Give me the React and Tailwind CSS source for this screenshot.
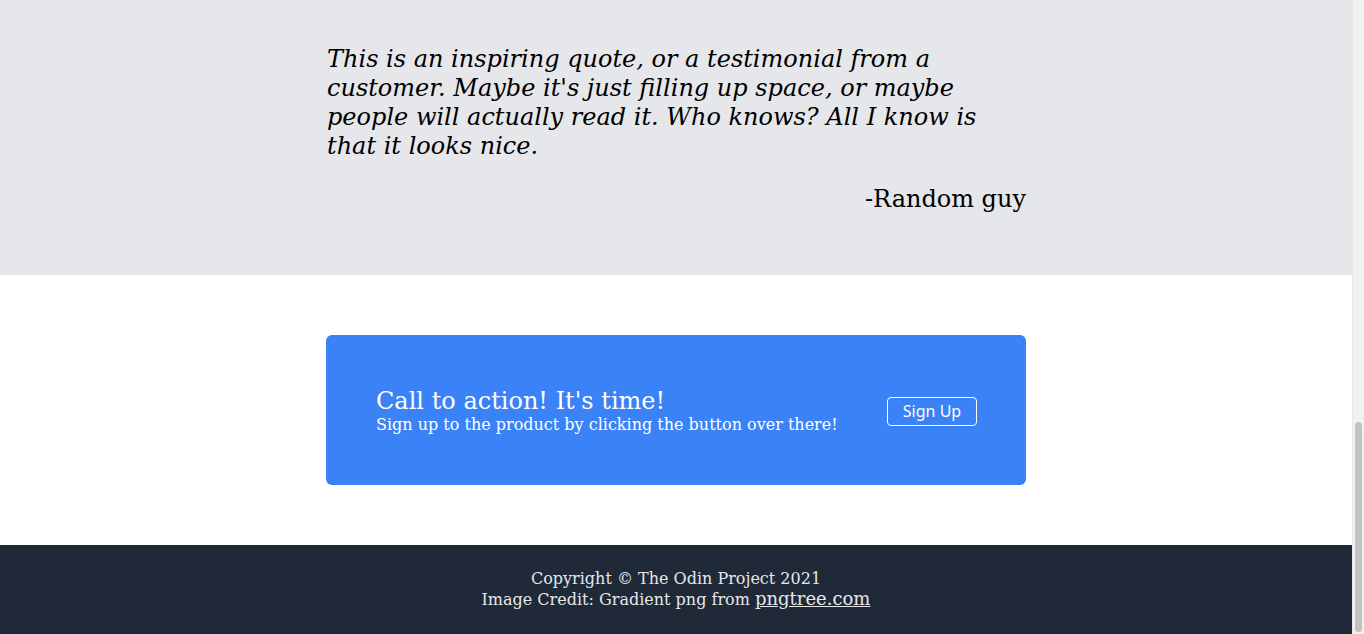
import React from 'react';

const App = () => {
  return (
    <div className="flex h-[634px] overflow-hidden bg-white font-['DejaVu_Serif',serif]">
      <div className="flex-1 flex flex-col">
        {/* quote */}
        <section className="h-[275px] bg-[#e5e7eb] pt-[45px]">
          <div className="w-[700px] mx-auto text-black">
            <p className="text-[24px] leading-[29px] italic pl-[1px]">
              This is an inspiring quote, or a testimonial from a customer. Maybe it's just filling up space, or maybe people will actually read it. Who knows? All I know is that it looks nice.
            </p>
            <p className="mt-[24px] text-right text-[24px] leading-[29px]">-Random guy</p>
          </div>
        </section>

        {/* call to action */}
        <section className="py-[60px]">
          <div className="w-[700px] h-[150px] mx-auto rounded-md bg-[#3b82f6] flex items-center justify-between pl-[50px] pr-[49px] text-white">
            <div>
              <h2 className="text-[24px] leading-[28px]">Call to action! It's time!</h2>
              <p className="text-[16px] leading-[19px]">Sign up to the product by clicking the button over there!</p>
            </div>
            <button className="mt-[2px] w-[90px] h-[29px] border border-white rounded-[4px] text-[16px] font-['Noto_Sans',sans-serif] leading-none">
              Sign Up
            </button>
          </div>
        </section>

        {/* footer */}
        <footer className="flex-1 bg-[#1f2937] text-[#e5e7eb] text-center pt-[23px] text-[16px] leading-[21px]">
          <p>Copyright © The Odin Project 2021</p>
          <p className="-mt-[1px]">
            Image Credit: Gradient png from{' '}
            <a href="#" className="underline text-[18px]">pngtree.com</a>
          </p>
        </footer>
      </div>

      {/* scrollbar */}
      <div className="w-[12px] bg-[#f1f1f1] border-l border-[#e8e8e8] flex flex-col justify-end pb-[2px]">
        <div className="mx-auto w-[7px] h-[210px] rounded-full bg-[#c1c1c1]" />
      </div>
    </div>
  );
};

export default App;
